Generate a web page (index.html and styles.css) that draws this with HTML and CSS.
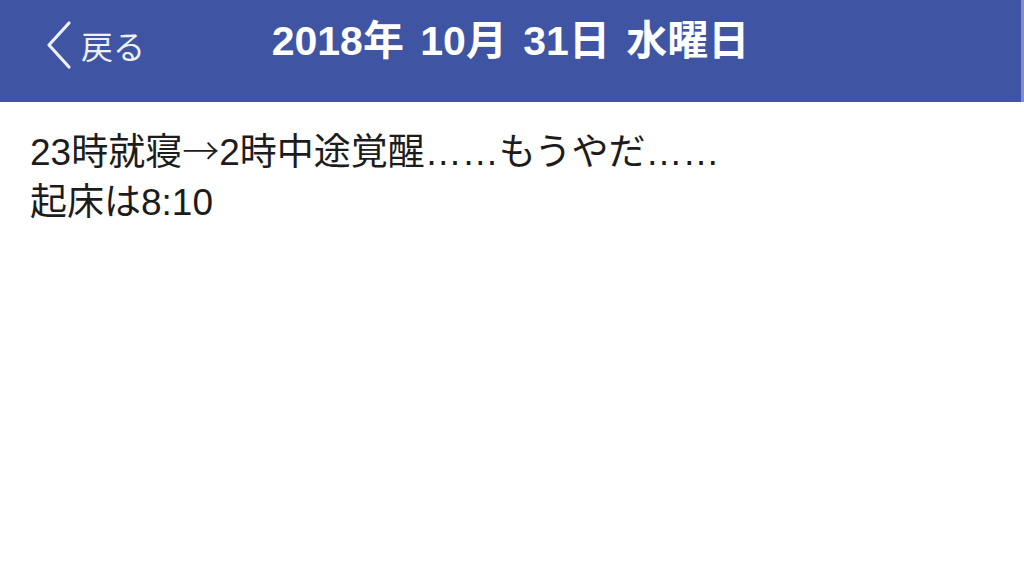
FILE: index.html
```html
<!DOCTYPE html>
<html lang="ja">
<head>
<meta charset="utf-8">
<title>2018年 10月 31日 水曜日</title>
<link rel="stylesheet" href="styles.css">
</head>
<body>
  <header class="navbar">
    <a class="back" href="#">
      <svg class="chevron" width="28" height="50" viewBox="0 0 28 50" aria-hidden="true">
        <path d="M24 3 L4 25 L24 47" fill="none" stroke="currentColor" stroke-width="3.2" stroke-linecap="round" stroke-linejoin="round"/>
      </svg>
      <span class="back-label">戻る</span>
    </a>
    <h1 class="title">2018年 10月 31日 水曜日</h1>
    <span class="spacer"></span>
  </header>
  <main class="entry">
    <p class="entry-text">23時就寝<span class="arrow">→</span>2時中途覚醒……もうやだ……<br>起床は8:10</p>
  </main>
</body>
</html>
```
FILE: styles.css
```css
html, body {
  margin: 0;
  padding: 0;
  background: #ffffff;
}

body {
  width: 1024px;
  height: 577px;
  overflow: hidden;
  font-family: "Liberation Sans", "Noto Sans CJK JP", sans-serif;
}

.navbar {
  height: 102px;
  box-sizing: border-box;
  background: #3f55a3;
  border-right: 3px solid #7f8fc6;
  display: grid;
  grid-template-columns: 1fr auto 1fr;
  align-items: center;
  color: #ffffff;
}

.back {
  display: flex;
  align-items: center;
  gap: 8px;
  padding-left: 45px;
  padding-bottom: 12px;
  color: #eef0f8;
  text-decoration: none;
}

.chevron {
  display: block;
}

.back-label {
  font-family: "Noto Sans CJK JP", sans-serif;
  font-size: 32px;
  line-height: 1;
}

.title {
  margin: 0;
  padding-bottom: 20px;
  font-size: 41px;
  font-weight: 700;
  line-height: 1;
  white-space: nowrap;
  word-spacing: 5px;
}

.entry {
  padding: 22px 30px 0;
}

.entry-text {
  margin: 0;
  font-size: 37px;
  line-height: 50px;
  color: #1c1c1c;
}

/* the arrow reads better at full CJK width than in the Latin face */
.arrow {
  font-family: "Noto Sans CJK JP", sans-serif;
  font-weight: 300;
}
```
